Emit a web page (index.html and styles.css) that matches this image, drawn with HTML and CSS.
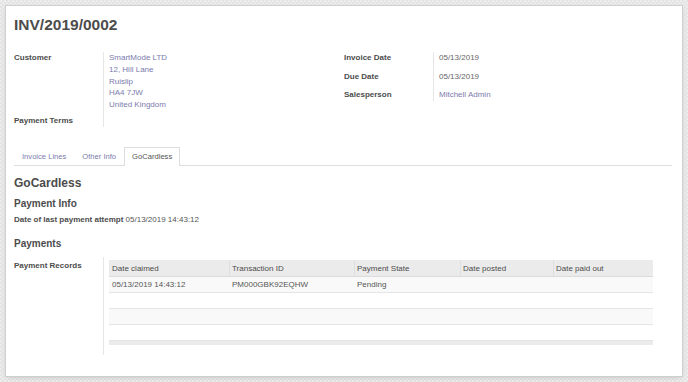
FILE: index.html
```html
<!DOCTYPE html>
<html lang="en">
  <head>
    <meta charset="UTF-8" />
    <meta name="viewport" content="width=device-width, initial-scale=1.0" />
    <title>INV/2019/0002</title>
    <link rel="stylesheet" href="styles.css">
  </head>
  <body>
    <div class="sheet">
      <h1 class="title">INV/2019/0002</h1>

      <div class="groups">
        <div class="group">
          <div class="row">
            <div class="label">Customer</div>
            <div class="value">
              <a class="link" href="#">SmartMode LTD<br />12, Hill Lane<br />Ruislip<br />HA4 7JW<br />United Kingdom</a>
            </div>
          </div>
          <div class="row last">
            <div class="label">Payment Terms</div>
            <div class="value"></div>
          </div>
        </div>

        <div class="group">
          <div class="row tall">
            <div class="label">Invoice Date</div>
            <div class="value">05/13/2019</div>
          </div>
          <div class="row tall">
            <div class="label">Due Date</div>
            <div class="value">05/13/2019</div>
          </div>
          <div class="row tall">
            <div class="label">Salesperson</div>
            <div class="value"><a class="link" href="#">Mitchell Admin</a></div>
          </div>
        </div>
      </div>

      <div class="tabs">
        <a class="tab" href="#">Invoice Lines</a>
        <a class="tab" href="#">Other Info</a>
        <a class="tab active" href="#">GoCardless</a>
      </div>

      <h2 class="heading">GoCardless</h2>
      <h3 class="subheading">Payment Info</h3>
      <div class="attempt">
        <span class="label-inline">Date of last payment attempt</span>
        <span>05/13/2019 14:43:12</span>
      </div>

      <h3 class="subheading payments">Payments</h3>
      <div class="records">
        <div class="label">Payment Records</div>
        <div class="value">
          <table class="list">
            <thead>
              <tr>
                <th class="c1">Date claimed</th>
                <th class="c2">Transaction ID</th>
                <th class="c3">Payment State</th>
                <th class="c4">Date posted</th>
                <th class="c5">Date paid out</th>
              </tr>
            </thead>
            <tbody>
              <tr>
                <td>05/13/2019 14:43:12</td>
                <td>PM000GBK92EQHW</td>
                <td>Pending</td>
                <td></td>
                <td></td>
              </tr>
              <tr><td></td><td></td><td></td><td></td><td></td></tr>
              <tr><td></td><td></td><td></td><td></td><td></td></tr>
              <tr><td></td><td></td><td></td><td></td><td></td></tr>
            </tbody>
            <tfoot>
              <tr><td colspan="5"></td></tr>
            </tfoot>
          </table>
        </div>
      </div>
    </div>
  </body>
</html>
```

FILE: styles.css
```css
html,
body {
  margin: 0;
  height: 100%;
}

body {
  padding: 5px;
  box-sizing: border-box;
  font-family: "Liberation Sans", Arial, sans-serif;
  font-size: 8px;
  color: #4c4c4c;
  background: repeating-conic-gradient(#e3e3e3 0 25%, #ededed 0 50%) 0 0 / 4px 4px;
}

.sheet {
  width: 678px;
  height: 372px;
  box-sizing: border-box;
  padding: 9px 10px 0 8px;
  background: #ffffff;
  border: 1px solid #cfcfcf;
  box-shadow: 0 2px 6px -3px rgba(0, 0, 0, 0.25);
}

.title {
  margin: 0;
  font-size: 15.5px;
  line-height: 20px;
  font-weight: bold;
  color: #4c4c4c;
}

.groups {
  display: grid;
  grid-template-columns: 320px 1fr;
  column-gap: 10px;
  margin-top: 17px;
}

.row {
  display: grid;
  grid-template-columns: 89px 1fr;
  line-height: 11.6px;
}

.group:first-child .row {
  line-height: 11.8px;
}

.row .value {
  border-left: 1px solid #e6e6e6;
  padding: 0 0 4px 5px;
  color: #666666;
}

.row.last .value {
  padding-bottom: 2px;
}

.row.tall .value {
  padding-bottom: 7px;
  min-height: 11.6px;
}

.row.tall:last-child .value {
  padding-bottom: 0;
}

.label,
.label-inline {
  font-weight: bold;
  color: #4c4c4c;
}

.link {
  color: #7c7bad;
  text-decoration: none;
}

.tabs {
  display: flex;
  margin-top: 20px;
  border-bottom: 1px solid #dddddd;
}

.tab {
  padding: 0 7px;
  font-size: 7.6px;
  line-height: 17px;
  border: 1px solid transparent;
  border-bottom: 0;
  color: #7c7bad;
  text-decoration: none;
}

.tab.active {
  color: #555555;
  background: #ffffff;
  border-color: #dddddd;
  margin-bottom: -1px;
  padding-bottom: 1px;
}

.heading {
  margin: 9px 0 0;
  font-size: 12px;
  line-height: 16px;
  font-weight: bold;
}

.subheading {
  margin: 6px 0 0;
  font-size: 10px;
  line-height: 14px;
  font-weight: bold;
}

.attempt {
  margin-top: 3px;
  line-height: 11.6px;
  color: #555555;
}

.subheading.payments {
  margin-top: 12px;
}

.records {
  display: grid;
  grid-template-columns: 89px 1fr;
  margin-top: 6px;
  line-height: 11.6px;
}

.records .label {
  padding-top: 3px;
}

.records .value {
  border-left: 1px solid #e6e6e6;
  padding: 3px 0 10px 5px;
}

.list {
  width: 544px;
  border-collapse: collapse;
  table-layout: fixed;
  color: #555555;
}

.list th,
.list td {
  height: 15px;
  padding: 0 3px;
  text-align: left;
  font-weight: normal;
  white-space: nowrap;
  overflow: hidden;
}

.list th {
  height: 16px;
  background: #ebebeb;
  border-bottom: 1px solid #dcdcdc;
  box-shadow: inset 1px 0 0 #e0e0e0;
  color: #4c4c4c;
}

.list th:first-child {
  box-shadow: none;
}

.list td {
  border-bottom: 1px solid #e4e4e4;
}

.list tbody tr:nth-child(odd) td {
  background: #f9f9f9;
}

.list tfoot td {
  height: 4px;
  padding: 0;
  background: #ebebeb;
  border: 0;
}

.c1 { width: 114px; }
.c2 { width: 119px; }
.c3 { width: 100px; }
.c4 { width: 87px; }
.c5 { width: 94px; }
```
